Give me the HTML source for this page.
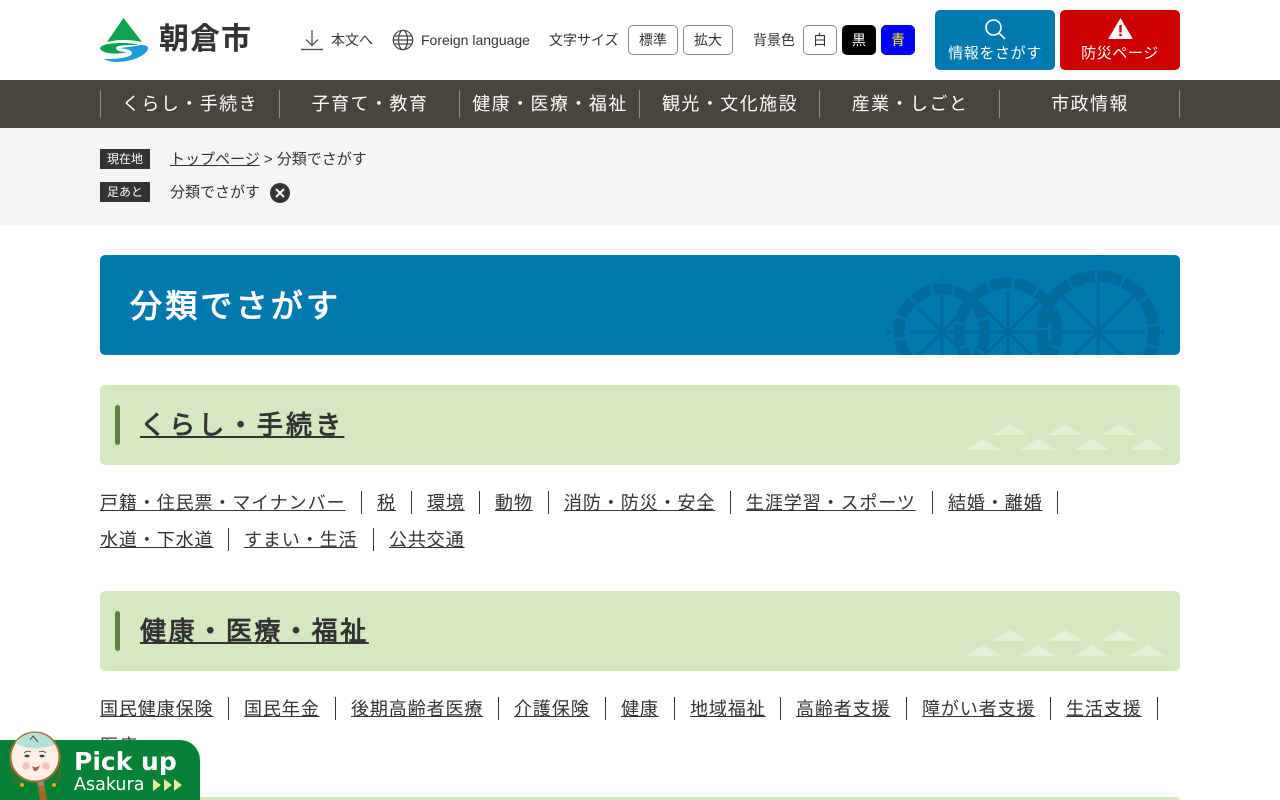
<!DOCTYPE html>
<html lang="ja"><head><meta charset="utf-8"><title>分類でさがす | 朝倉市</title>
<style>
html,body{margin:0;padding:0;background:#fff;width:1280px;height:800px;overflow:hidden}
body{position:relative;font-family:"Liberation Sans","WenQuanYi Zen Hei",sans-serif;color:#333}
.a{position:absolute;white-space:nowrap}
u{text-decoration:inherit;font-family:"Noto Sans CJK JP",sans-serif;line-height:0}
.tb{position:absolute;box-sizing:border-box;text-align:center;border:1px solid #8a8a8a;border-radius:5px;font-size:14px;height:30px;line-height:28px;top:25px;background:#fff;color:#333}
.n{position:absolute;top:80px;height:48px;width:180px;text-align:center;font-size:18px;letter-spacing:1.44px;line-height:48px;color:#fff}
.d{position:absolute;top:90px;width:1px;height:28px;background:#8f8b84}
.bar{position:absolute;left:100px;width:1080px;height:80px;background:#d5e8c0;border-radius:5px;overflow:hidden}
.bar i{position:absolute;left:15px;top:20px;width:5px;height:40px;background:#5b7f3e;border-radius:3px}
.bar b{position:absolute;left:40px;top:0;font-size:26px;font-weight:700;letter-spacing:2.6px;line-height:80px;text-decoration:underline;color:#333;white-space:nowrap}
.bar svg{position:absolute;right:15px;top:39px}
.l{position:absolute;font-size:18px;letter-spacing:.9px;line-height:26px;margin-top:1px;text-decoration:underline;white-space:nowrap;color:#333}
.s{position:absolute;width:1px;height:23px;background:#333}
</style></head><body>

<svg class="a" style="left:100px;top:18px" width="48" height="44" viewBox="0 0 48 44">
<path d="M23.500 0 L42 24 Q24 20 7 24 Z" fill="#0fa14f"/>
<path d="M0 30 C2 26 12 25 24 25 C30 25 36 26 38 27 C30 27 16 27 16 30 C16 33 22 34 27 34 C20 36 14 36 8 35 C3 34 0 32 0 30Z" fill="#0fa14f"/>
<path d="M48 30 C48 36 34 44 16 44 C11 44 6 42 3 41 C16 41 32 40 32 35 C32 32 26 31 20 30 C28 29 36 28 41 27 C45 27 48 28 48 30Z" fill="#1c9bd8"/>
</svg>
<div class="a" style="left:159px;top:18px;font-family:'Liberation Sans','Noto Sans CJK JP',sans-serif;font-size:30px;line-height:44px;font-weight:700;letter-spacing:1px;color:#333">朝倉市</div>

<svg class="a" style="left:300px;top:29px" width="24" height="22" viewBox="0 0 24 22" fill="none" stroke="#444" stroke-width="1.2"><path d="M1 20.500H23M12 1V16M6 10.500L12 16.500L18 10.500"/></svg>
<div class="a" style="left:331px;top:30px;font-size:14px;line-height:20px">本文へ</div>
<svg class="a" style="left:392px;top:29px" width="22" height="22" viewBox="0 0 22 22" fill="none" stroke="#444" stroke-width="1.2"><circle cx="11" cy="11" r="9.700"/><ellipse cx="11" cy="11" rx="4.500" ry="9.700"/><path d="M2.200 7H19.800M2.200 15H19.800M1.300 11H20.700"/></svg>
<div class="a" style="left:421px;top:30px;font-size:14px;line-height:20px">Foreign language</div>

<div class="a" style="left:549px;top:30px;font-size:14px;line-height:20px">文字サイズ</div>
<div class="tb" style="left:628px;width:50px">標準</div>
<div class="tb" style="left:683px;width:50px">拡大</div>
<div class="a" style="left:753px;top:30px;font-size:14px;line-height:20px">背景色</div>
<div class="tb" style="left:803px;width:34px">白</div>
<div class="tb" style="left:842px;width:34px;background:#000;border-color:#000;color:#fff">黒</div>
<div class="tb" style="left:881px;width:34px;background:#00f;border-color:#00f;color:#ff0">青</div>

<div class="a" style="left:935px;top:10px;width:120px;height:60px;background:#0079b0;border-radius:5px"></div>
<svg class="a" style="left:984px;top:18px" width="22" height="22" viewBox="0 0 22 22" fill="none" stroke="#fff" stroke-width="1.600"><circle cx="9.500" cy="9.500" r="7.500"/><path d="M15 15L21 21"/></svg>
<div class="a" style="left:935px;top:43px;width:120px;text-align:center;font-size:15px;line-height:22px;letter-spacing:.6px;color:#fff">情報をさがす</div>
<div class="a" style="left:1060px;top:10px;width:120px;height:60px;background:#cc0000;border-radius:5px"></div>
<svg class="a" style="left:1108px;top:18px" width="25" height="21" viewBox="0 0 25 21"><path d="M12.500 1L24 20.500H1Z" fill="#fff" stroke="#fff" stroke-linejoin="round"/><rect x="11.300" y="7" width="2.400" height="7.500" fill="#cc0000"/><rect x="11.300" y="15.800" width="2.400" height="2.400" fill="#cc0000"/></svg>
<div class="a" style="left:1060px;top:43px;width:120px;text-align:center;font-size:15px;line-height:22px;letter-spacing:.6px;color:#fff">防災ページ</div>

<div class="a" style="left:0;top:80px;width:1280px;height:48px;background:#48433b"></div>
<div class="n" style="left:100px">くらし<u>・</u>手続き</div>
<div class="n" style="left:280px">子育て<u>・</u>教育</div>
<div class="n" style="left:460px">健康<u>・</u>医療<u>・</u>福祉</div>
<div class="n" style="left:640px">観光<u>・</u>文化施設</div>
<div class="n" style="left:820px">産業<u>・</u>しごと</div>
<div class="n" style="left:1000px">市政情報</div>
<div class="d" style="left:100px"></div><div class="d" style="left:279px"></div><div class="d" style="left:459px"></div><div class="d" style="left:639px"></div><div class="d" style="left:819px"></div><div class="d" style="left:999px"></div><div class="d" style="left:1179px"></div>

<div class="a" style="left:0;top:128px;width:1280px;height:97px;background:#f5f5f5"></div>
<div class="a" style="left:100px;top:149px;width:50px;height:20px;background:#333;color:#fff;font-size:12px;line-height:20px;text-align:center">現在地</div>
<div class="a" style="left:170px;top:149px;font-size:15px;line-height:22px"><span style="text-decoration:underline">トップページ</span> &gt; 分類でさがす</div>
<div class="a" style="left:100px;top:182px;width:50px;height:20px;background:#333;color:#fff;font-size:12px;line-height:20px;text-align:center">足あと</div>
<div class="a" style="left:170px;top:182px;font-size:15px;line-height:22px">分類でさがす</div>
<svg class="a" style="left:270px;top:183px" width="20" height="20" viewBox="0 0 20 20"><circle cx="10" cy="10" r="10" fill="#333"/><path d="M6 6L14 14M14 6L6 14" stroke="#fff" stroke-width="2"/></svg>

<div class="a" style="left:100px;top:255px;width:1080px;height:100px;background:#0079b0;border-radius:5px;overflow:hidden">
<svg style="position:absolute;left:780px;top:0" width="300" height="100" viewBox="0 0 300 100" fill="none" stroke="#006c9e">
<circle cx="62" cy="77" r="43" stroke-width="11" stroke-dasharray="19 2.500"/><path d="M30 77H94M62 40V100M38 53L86 101M86 53L38 101" stroke-width="3"/>
<circle cx="128" cy="77" r="49" stroke-width="11" stroke-dasharray="22 2.500" stroke-dashoffset="8"/><path d="M90 77H166M128 36V100M98 47L158 107M158 47L98 107" stroke-width="3"/>
<circle cx="218" cy="77" r="56" stroke-width="12" stroke-dasharray="25 2.500" stroke-dashoffset="12"/><path d="M172 77H264M218 28V100M183 42L253 112M253 42L183 112" stroke-width="3"/>
<path d="M7 75h3v4h-3zM170 75h3v4h-3zM281 75h3v4h-3zM61 21h4v2h-4zM127 8h4v2h-4zM216 -1h4v2h-4z" fill="#006c9e" stroke="none"/>
</svg>
<div class="a" style="left:30px;top:27px;font-size:32px;font-weight:700;letter-spacing:3.2px;line-height:48px;color:#fff">分類でさがす</div>
</div>

<div class="bar" style="top:385px"><i></i><b style="letter-spacing:3.2px">くらし<u>・</u>手続き</b>
<svg width="200" height="26" viewBox="0 0 200 26" fill="#e3f0d6"><path d="M45 0L63 11H27ZM100 0L118 11H82ZM154 0L172 11H136ZM18 15L36 26H0ZM73 15L91 26H55ZM127 15L145 26H109ZM182 15L200 26H164Z"/></svg></div>

<a class="l" style="left:100px;top:489px">戸籍<u>・</u>住民票<u>・</u>マイナンバー</a><div class="s" style="left:361px;top:491px"></div>
<a class="l" style="left:377px;top:489px">税</a><div class="s" style="left:411px;top:491px"></div>
<a class="l" style="left:427px;top:489px">環境</a><div class="s" style="left:479px;top:491px"></div>
<a class="l" style="left:495px;top:489px">動物</a><div class="s" style="left:548px;top:491px"></div>
<a class="l" style="left:564px;top:489px">消防<u>・</u>防災<u>・</u>安全</a><div class="s" style="left:730px;top:491px"></div>
<a class="l" style="left:746px;top:489px">生涯学習<u>・</u>スポーツ</a><div class="s" style="left:932px;top:491px"></div>
<a class="l" style="left:948px;top:489px">結婚<u>・</u>離婚</a><div class="s" style="left:1057px;top:491px"></div>
<a class="l" style="left:100px;top:526px">水道<u>・</u>下水道</a><div class="s" style="left:228px;top:528px"></div>
<a class="l" style="left:244px;top:526px">すまい<u>・</u>生活</a><div class="s" style="left:373px;top:528px"></div>
<a class="l" style="left:389px;top:526px">公共交通</a>

<div class="bar" style="top:591px"><i></i><b>健康<u>・</u>医療<u>・</u>福祉</b>
<svg width="200" height="26" viewBox="0 0 200 26" fill="#e3f0d6"><path d="M45 0L63 11H27ZM100 0L118 11H82ZM154 0L172 11H136ZM18 15L36 26H0ZM73 15L91 26H55ZM127 15L145 26H109ZM182 15L200 26H164Z"/></svg></div>

<a class="l" style="left:100px;top:695px">国民健康保険</a><div class="s" style="left:228px;top:697px"></div>
<a class="l" style="left:244px;top:695px">国民年金</a><div class="s" style="left:335px;top:697px"></div>
<a class="l" style="left:351px;top:695px">後期高齢者医療</a><div class="s" style="left:498px;top:697px"></div>
<a class="l" style="left:514px;top:695px">介護保険</a><div class="s" style="left:605px;top:697px"></div>
<a class="l" style="left:621px;top:695px">健康</a><div class="s" style="left:674px;top:697px"></div>
<a class="l" style="left:690px;top:695px">地域福祉</a><div class="s" style="left:780px;top:697px"></div>
<a class="l" style="left:796px;top:695px">高齢者支援</a><div class="s" style="left:906px;top:697px"></div>
<a class="l" style="left:922px;top:695px">障がい者支援</a><div class="s" style="left:1050px;top:697px"></div>
<a class="l" style="left:1066px;top:695px">生活支援</a><div class="s" style="left:1157px;top:697px"></div>
<a class="l" style="left:100px;top:732px">医療</a>

<div class="bar" style="top:797px;height:3px;border-radius:5px 5px 0 0"></div>

<div class="a" style="left:0;top:740px;width:200px;height:60px;background:#068135;border-radius:0 20px 0 0"></div>
<svg class="a" style="left:0;top:725px" width="70" height="75" viewBox="0 0 70 75">
<path d="M12 40C9 50 14 56 22 60M58 40C62 50 58 56 54 60" fill="none" stroke="#8a5a2a" stroke-width="1"/>
<circle cx="22" cy="60" r="2" fill="#f2a900"/><circle cx="54" cy="60" r="2" fill="#f2a900"/>
<path d="M36 52H43L47 75H40Z" fill="#9c6a2c"/><path d="M36 52H43L44 61H38Z" fill="#8d8d8d"/>
<circle cx="35" cy="32" r="24.500" fill="#fdeee6" stroke="#a5702f" stroke-width="2"/>
<path d="M15 18C22 9 32 7 38 8C46 9 52 14 55 20C42 24 26 25 15 18Z" fill="#b5e0d8"/>
<path d="M30 15L33 11L38 17" fill="none" stroke="#444" stroke-width="1"/>
<path d="M24 28Q27 25 31 27M39 27Q43 25 46 28" fill="none" stroke="#555" stroke-width="1"/>
<ellipse cx="27" cy="31" rx="2.500" ry="1.400" fill="#444"/><ellipse cx="42" cy="31" rx="2.500" ry="1.400" fill="#444"/>
<circle cx="26" cy="41" r="3.800" fill="#f0c4bd"/><circle cx="46" cy="41" r="3.800" fill="#f0c4bd"/>
<path d="M32 41Q36 44 40 40Q38 47 34 46Z" fill="#b35a3a"/>
</svg>
<div class="a" style="left:74px;top:745px;font-family:'DejaVu Sans',sans-serif;font-size:25px;font-weight:700;line-height:34px;color:#fff">Pick up</div>
<div class="a" style="left:74px;top:774px;font-family:'DejaVu Sans',sans-serif;font-size:17.500px;line-height:22px;color:#fff">Asakura</div>
<svg class="a" style="left:153px;top:779px" width="29" height="12" viewBox="0 0 29 12" fill="#e5eb96"><path d="M0 0L8 6L0 12ZM11 0L19 6L11 12ZM21 0L29 6L21 12Z"/></svg>
</body></html>
